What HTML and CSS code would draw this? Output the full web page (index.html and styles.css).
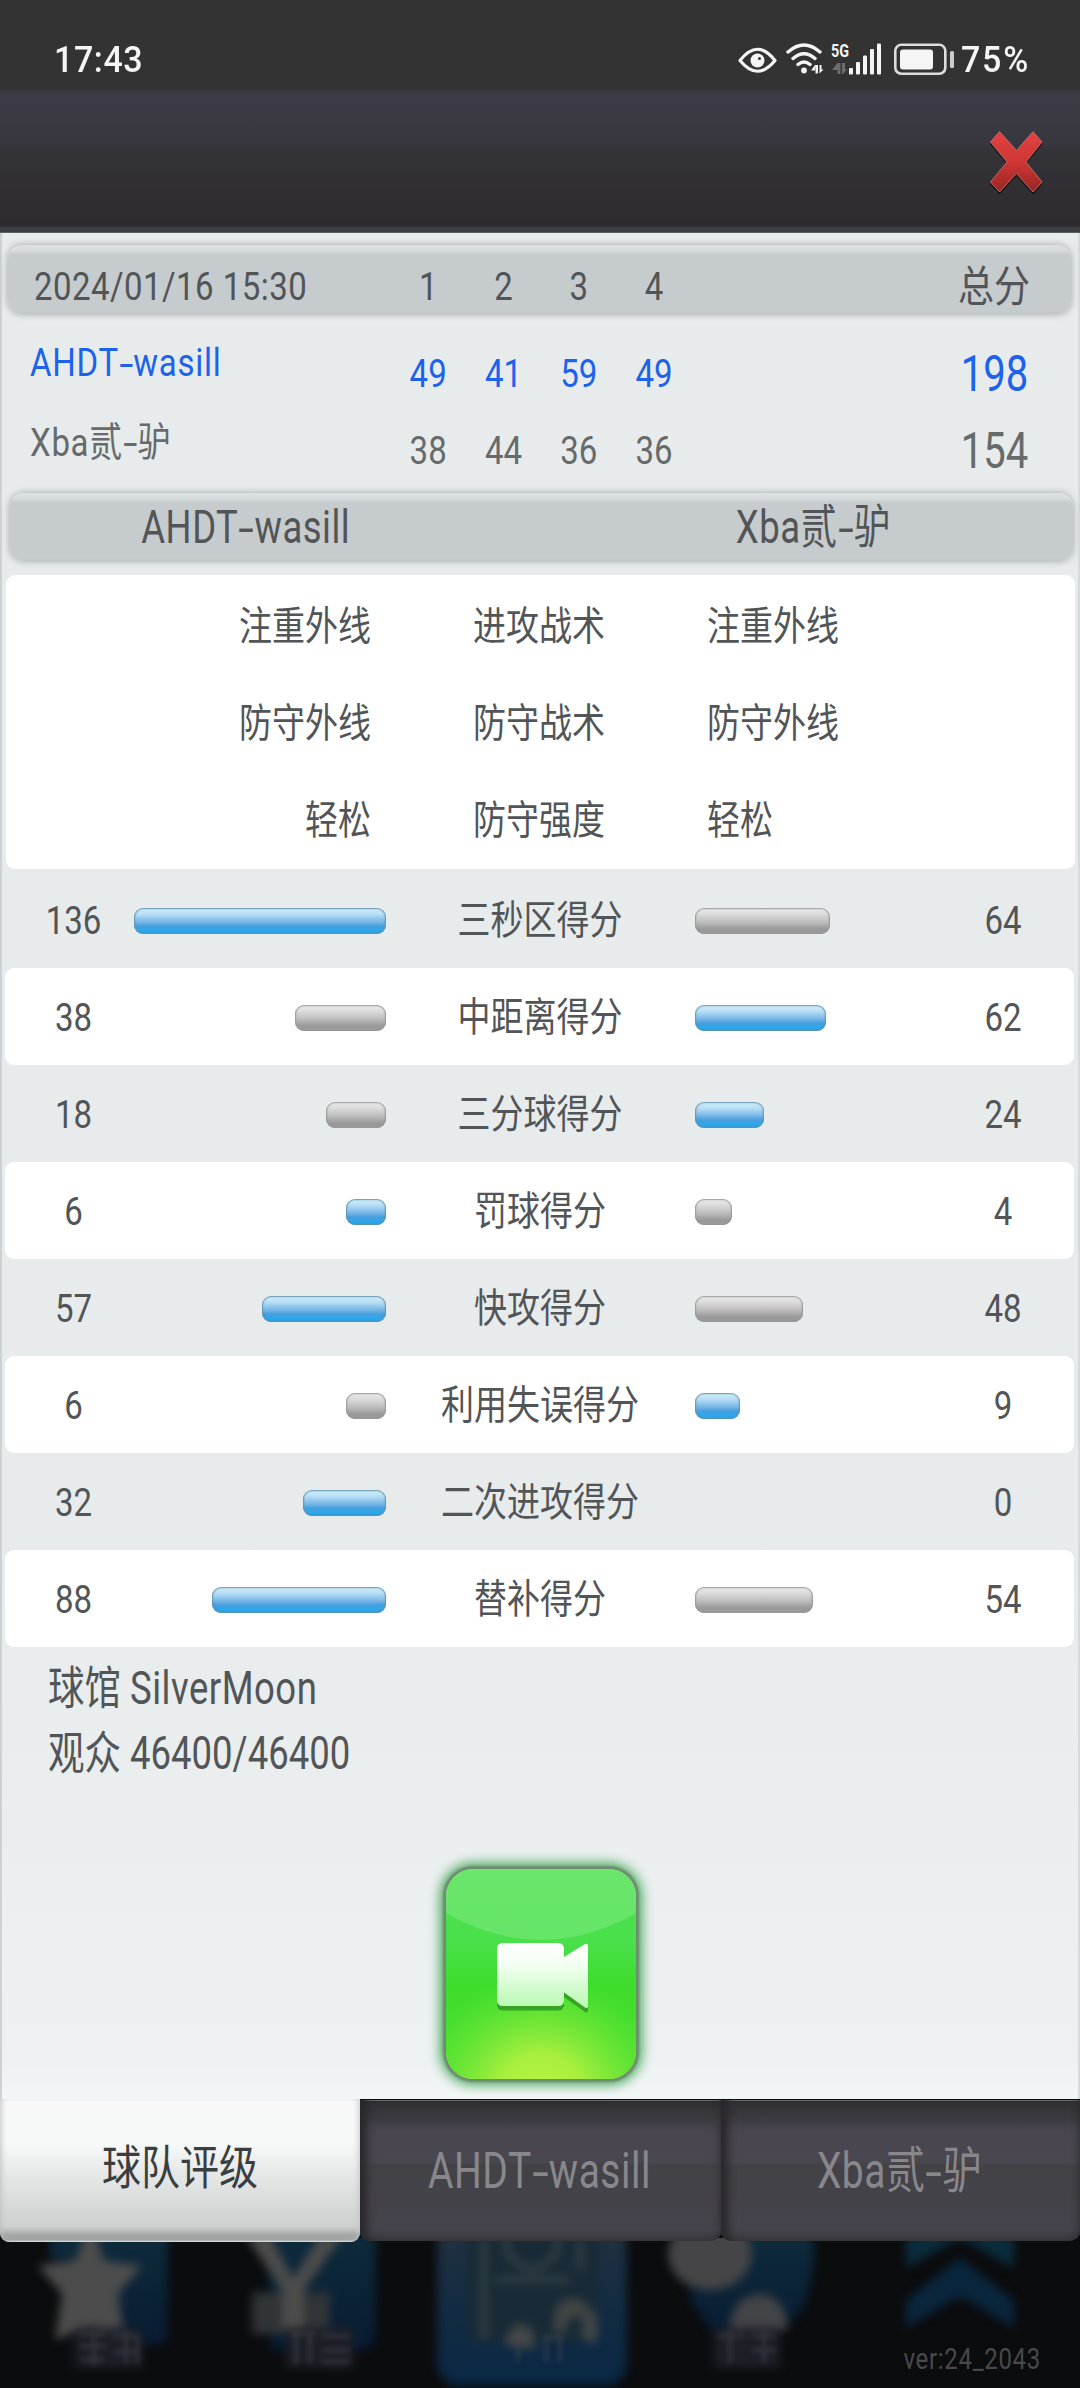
FILE: index.html
```html
<!DOCTYPE html>
<html lang="zh-CN">
<head>
<meta charset="utf-8">
<title>比赛统计</title>
<link rel="stylesheet" href="styles.css">
</head>
<body>
<div class="screen">
  <header class="status">
    <span class="status-time">17:43</span>
    <svg class="status-icons" width="220" height="40" viewBox="735 39 220 40" fill="#f5f5f5">
      <path d="M740 60.500Q757.500 38 775 60.500Q757.500 82 740 60.500Z" fill="none" stroke="#f5f5f5" stroke-width="3.200" stroke-linejoin="round"/>
      <circle cx="757.500" cy="60.500" r="7"/><circle cx="759.500" cy="58.500" r="1.500" fill="#333"/>
      <g fill="none" stroke="#f5f5f5" stroke-width="3.400" stroke-linecap="round"><path d="M788 52Q804 38 820 52M793 58.500Q804 49 815 58.500M798 64.500Q804 59.500 810 64.500"/></g>
      <circle cx="804" cy="70.500" r="2.900"/>
      <path d="M815.500 65V73.500H818V65L815 65L811 70.500H815ZM819.500 65V73.500L823.500 69.500H821.500V65Z"/>
      <text x="831" y="57" class="net" textLength="18" lengthAdjust="spacingAndGlyphs">5G</text>
      <path d="M837.500 63V74H840.500V63H837.500L832 70H837.500ZM842 63V74H843L847 69H845V63Z" fill="#6d6d6d"/>
      <rect x="849" y="68" width="4" height="6.500" rx="1"/><rect x="856" y="62" width="4" height="12.500" rx="1"/><rect x="863" y="55.500" width="4" height="19" rx="1"/><rect x="870" y="49" width="4" height="25.500" rx="1"/><rect x="877" y="43.500" width="4" height="31" rx="1"/>
      <rect x="895.300" y="44.800" width="50" height="29" rx="6" fill="none" stroke="#ddd" stroke-width="2.600"/>
      <rect x="900" y="49.500" width="33" height="20" rx="3"/><rect x="950" y="51" width="4" height="17" rx="1.500" fill="#ccc"/>
    </svg>
    <span class="status-battery">75%</span>
  </header>

  <div class="titlebar">
    <svg class="close" width="60" height="70" viewBox="987 127 60 70">
      <defs><linearGradient id="red" x1="0" y1="0" x2="0" y2="1"><stop offset="0" stop-color="#e24341"/><stop offset=".5" stop-color="#cf3634"/><stop offset="1" stop-color="#982624"/></linearGradient></defs>
      <path d="M1000.500 133.500L1017.500 152.500L1034 133.500L1043.500 144L1027.500 163.500L1043.500 184L1034 194.500L1017.500 176L1000.500 194.500L991 184L1007.500 163.500L991 144Z" fill="#1d1113"/>
      <path d="M1000.500 131.500L1017.500 150.500L1034 131.500L1043 142L1027 162L1043 182L1034 192L1017.500 173.500L1000.500 192L991.500 182L1008 162L991.500 142Z" fill="url(#red)" stroke="#b86a68" stroke-width="1"/>
    </svg>
  </div>

  <main class="panel">
    <div class="bar score-grid">
      <span class="t date">2024/01/16 15:30</span>
      <span class="t c">1</span><span class="t c">2</span><span class="t c">3</span><span class="t c">4</span>
      <span></span><span class="t c sum-label">总分</span>
    </div>
    <div class="score-grid score win">
      <span class="t name">AHDT<i class="dash">-</i>wasill</span>
      <span class="t c">49</span><span class="t c">41</span><span class="t c">59</span><span class="t c">49</span>
      <span></span><span class="t c total">198</span>
    </div>
    <div class="score-grid score lose">
      <span class="t name">Xba贰<i class="dash">-</i>驴</span>
      <span class="t c">38</span><span class="t c">44</span><span class="t c">36</span><span class="t c">36</span>
      <span></span><span class="t c total">154</span>
    </div>
    <div class="bar teams">
      <span class="t">AHDT<i class="dash">-</i>wasill</span><span class="t">Xba贰<i class="dash">-</i>驴</span>
    </div>

    <section class="tactics">
      <div class="tactic"><span class="t">注重外线</span><span class="t c">进攻战术</span><span class="t">注重外线</span></div>
      <div class="tactic"><span class="t">防守外线</span><span class="t c">防守战术</span><span class="t">防守外线</span></div>
      <div class="tactic"><span class="t">轻松</span><span class="t c">防守强度</span><span class="t">轻松</span></div>
    </section>

    <section class="stats">
      <div class="stat"><span class="t c">136</span><div class="track"><b class="pill blue" style="width:252px"></b></div><span class="t c">三秒区得分</span><div class="track"><b class="pill" style="width:135px"></b></div><span class="t c">64</span></div>
      <div class="stat"><span class="t c">38</span><div class="track"><b class="pill" style="width:91px"></b></div><span class="t c">中距离得分</span><div class="track"><b class="pill blue" style="width:131px"></b></div><span class="t c">62</span></div>
      <div class="stat"><span class="t c">18</span><div class="track"><b class="pill" style="width:60px"></b></div><span class="t c">三分球得分</span><div class="track"><b class="pill blue" style="width:69px"></b></div><span class="t c">24</span></div>
      <div class="stat"><span class="t c">6</span><div class="track"><b class="pill blue" style="width:40px"></b></div><span class="t c">罚球得分</span><div class="track"><b class="pill" style="width:37px"></b></div><span class="t c">4</span></div>
      <div class="stat"><span class="t c">57</span><div class="track"><b class="pill blue" style="width:124px"></b></div><span class="t c">快攻得分</span><div class="track"><b class="pill" style="width:108px"></b></div><span class="t c">48</span></div>
      <div class="stat"><span class="t c">6</span><div class="track"><b class="pill" style="width:40px"></b></div><span class="t c">利用失误得分</span><div class="track"><b class="pill blue" style="width:45px"></b></div><span class="t c">9</span></div>
      <div class="stat"><span class="t c">32</span><div class="track"><b class="pill blue" style="width:83px"></b></div><span class="t c">二次进攻得分</span><div class="track"></div><span class="t c">0</span></div>
      <div class="stat"><span class="t c">88</span><div class="track"><b class="pill blue" style="width:174px"></b></div><span class="t c">替补得分</span><div class="track"><b class="pill" style="width:118px"></b></div><span class="t c">54</span></div>
    </section>

    <section class="info">
      <span class="t">球馆 <span class="venue">SilverMoon</span></span>
      <span class="t">观众 46400/46400</span>
    </section>

    <button class="replay" aria-label="回放">
      <svg width="190" height="210" viewBox="0 0 190 210">
        <defs>
          <linearGradient id="g" x1="0" y1="0" x2="0" y2="1"><stop offset="0" stop-color="#4fe150"/><stop offset=".35" stop-color="#49e04b"/><stop offset=".55" stop-color="#3edc2c"/><stop offset="1" stop-color="#4fe030"/></linearGradient>
          <radialGradient id="y" gradientUnits="userSpaceOnUse" cx="95" cy="230" r="125"><stop offset="0" stop-color="#b9f542"/><stop offset=".35" stop-color="#b2f040" stop-opacity=".92"/><stop offset="1" stop-color="#70e838" stop-opacity="0"/></radialGradient>
          <linearGradient id="w" x1="0" y1="0" x2="0" y2="1"><stop offset="0" stop-color="#fff"/><stop offset=".3" stop-color="#f5fff4"/><stop offset="1" stop-color="#b8fab0"/></linearGradient>
        </defs>
        <rect width="190" height="210" fill="url(#g)"/>
        <rect width="190" height="210" fill="url(#y)"/>
        <path d="M0 0H190V44Q95 98 0 44Z" fill="#fff" opacity=".16"/>
        <path transform="translate(0 4.500)" d="M57 74H112Q118 74 118 80V88L139 75Q142 74 142 77V137Q142 140 139 138.500L118 123.500V131Q118 137 112 137H57Q51 137 51 131V80Q51 74 57 74Z" fill="#2c8f20" opacity=".75"/>
        <path d="M57 74H112Q118 74 118 80V88L139 75Q142 74 142 77V137Q142 140 139 138.500L118 123.500V131Q118 137 112 137H57Q51 137 51 131V80Q51 74 57 74Z" fill="url(#w)"/>
      </svg>
    </button>
  </main>

  <footer class="bottom">
    <nav class="tabs">
      <a class="tab active"><span class="t">球队评级</span></a>
      <a class="tab"><span class="t">AHDT<i class="dash">-</i>wasill</span></a>
      <a class="tab"><span class="t">Xba贰<i class="dash">-</i>驴</span></a>
    </nav>
    <div class="dock">
      <svg class="dock-art" width="1080" height="150" viewBox="0 2238 1080 150">
        <defs>
          <filter id="b" x="-20%" y="-20%" width="140%" height="140%" color-interpolation-filters="sRGB"><feGaussianBlur stdDeviation="5"/></filter>
          <linearGradient id="n" x1="0" y1="0" x2="0" y2="1"><stop offset="0" stop-color="#0e2c3c"/><stop offset="1" stop-color="#081b32"/></linearGradient>
          <linearGradient id="p" x1="0" y1="0" x2="0" y2="1"><stop offset="0" stop-color="#273240"/><stop offset=".5" stop-color="#142c42"/><stop offset="1" stop-color="#092744"/></linearGradient>
        </defs>
        <g filter="url(#b)">
          <path d="M100 2225H168V2332Q168 2345 155 2345H110V2260H50V2225Z" fill="url(#n)"/>
          <path d="M90 2220L104 2260L142 2266L118 2294L124 2336L90 2326L55 2340L62 2294L38 2266L76 2260Z" fill="#4c4c4c"/>
          <path d="M260 2225H376V2332Q376 2350 360 2350H270V2290Z" fill="url(#n)"/>
          <rect x="252" y="2292" width="78" height="42" fill="#303436"/>
          <path d="M246 2236L282 2290V2328H304V2290L342 2236H320L293 2278L270 2236Z" fill="#4c4c4b"/>
          <rect x="437" y="2210" width="190" height="176" rx="22" fill="url(#p)"/>
          <rect x="468" y="2225" width="130" height="116" rx="10" fill="#182a36"/>
          <g fill="none" stroke="#2d3a41" stroke-width="9"><circle cx="532" cy="2242" r="26"/><path d="M484 2238V2340M496 2280H570M580 2240V2270"/></g>
          <path d="M504 2345Q515 2310 534 2332V2350ZM556 2308Q570 2288 590 2308Q604 2320 594 2345L582 2338V2315L567 2320V2332H552Z" fill="#414545"/>
          <path d="M690 2225H810Q822 2260 802 2310L770 2342H720L690 2300Z" fill="url(#n)"/>
          <ellipse cx="710" cy="2254" rx="42" ry="36" fill="#454547"/><path d="M729 2330Q732 2296 760 2294Q786 2296 788 2330Z" fill="#434447"/>
          <path d="M906 2236L960 2208L1014 2236V2268L960 2238L906 2268Z" fill="#0b2c3c"/>
          <path d="M906 2300L960 2258L1014 2300V2328L960 2296L906 2328Z" fill="#0a263d"/>
          <g fill="#1d1f27"><rect x="74" y="2328" width="68" height="40"/><rect x="286" y="2328" width="68" height="40"/><rect x="714" y="2328" width="66" height="40"/></g>
        </g>
        <g opacity=".45" stroke="#4a4c55" stroke-width="4" fill="none" filter="url(#s)">
          <path d="M80 2334H106M80 2346H106M82 2360H104M94 2330V2366M112 2336H138M114 2352H136M126 2330V2364M138 2336V2364M290 2334H316M296 2330V2364M310 2334V2364M322 2336H350M322 2350H350M322 2362H350M718 2336H744M730 2330V2364M752 2336H776M752 2350H776M764 2330V2364M506 2338H530M518 2332V2362M542 2338H564M546 2334V2362M560 2334V2362"/>
        </g>
        <filter id="s"><feGaussianBlur stdDeviation="2.800"/></filter>
      </svg>
      <span class="t version">ver:24_2043</span>
    </div>
  </footer>
</div>
</body>
</html>
```
FILE: styles.css
```css
* { box-sizing: border-box; }
body {
  margin: 0;
  background: #0b0c0e;
  font-family: Roboto, "Noto Sans CJK SC", sans-serif;
  font-size: 33px;
  line-height: 40px;
  color: #525557;
}
.screen { width: 1080px; height: 2388px; overflow: hidden; display: flex; flex-direction: column; }

.t { display: inline-block; transform: translateY(1.2px) scaleY(1.2); white-space: nowrap; }
.c { text-align: center; }
.dash { display: inline-block; width: .44em; text-align: center; font-style: normal; transform: translateY(.02em) scaleX(1.55); letter-spacing: 0; }

.status { height: 90px; padding: 28px 49px 0 54px; background: #333; color: #f5f5f5; display: flex; align-items: center; font-size: 34px; font-weight: 500; }
.status-time { letter-spacing: .6px; transform: scaleY(1.08); }
.status-icons { margin-left: auto; margin-right: 6px; }
.status-battery { width: 70px; letter-spacing: 1.8px; transform: scaleY(1.08); }
.net { font-size: 18px; font-weight: 700; }

.titlebar { height: 143px; padding: 37px 34px 0; display: flex; justify-content: flex-end; background: linear-gradient(#3a393e, #3c3a44 10px, #38363f 54px, #343337 60px, #2d2b30 136px, #3c4143 138px, #3a3f41 142px, #7b8081 143px); }

.panel { height: 1866px; display: flex; flex-direction: column; background: linear-gradient(#e7ebec 70%, #edf1f2 98%, #f3f6f7); box-shadow: inset 2px 0 #cbd1d4, inset -2px 0 #d5dadc; }
.bar { flex: none; height: 69px; margin: 12px 9px 0 8px; border-radius: 14px; background: linear-gradient(#dbe0e2, #d8dddf 5px, #c6cbce 10px, #c6cbce 66px, #bec4c7); box-shadow: 0 0 6px 1px #aeb4b7; align-items: center; }
.score-grid { display: grid; grid-template-columns: 390.5px repeat(4, 75.3px) 1fr 167px; align-items: center; }
.bar.score-grid { grid-template-columns: 382.5px repeat(4, 75.3px) 1fr 158px; padding-top: 12px; }
.date { padding-left: 26px; letter-spacing: .45px; }
.sum-label { font-size: 36px; padding-left: 4px; }
.score { flex: none; height: 77px; color: #666a6b; }
.win { margin-top: 20px; color: #1c62ec; }
.name { padding-left: 30px; letter-spacing: .7px; }
.win .name { transform: translateY(-10px) scaleY(1.2); }
.lose .name { transform: translateY(-7.5px) scaleY(1.2); }
.total { font-size: 40px; transform: translateY(1.5px) scaleY(1.27); padding-right: 4px; }
.teams { height: 68px; margin: 5px 7px 0 10px; display: grid; grid-template-columns: 1fr 1fr; text-align: center; font-size: 36.500px; }
.teams .t { transform: translateY(.5px) scaleY(1.28); }
.teams .t:first-child { padding-right: 60px; letter-spacing: .5px; }
.teams .t:last-child { padding-left: 12px; letter-spacing: .5px; }

.tactics { flex: none; margin: 14px 5px 0 6px; height: 294px; border-radius: 9px; background: #fff; }
.tactic { height: 97px; display: grid; grid-template-columns: 365px 1fr 372px; align-items: center; }
.tactic .t { transform: translateY(2.5px) scaleY(1.2); }
.tactic .t:first-child { text-align: right; }
.tactic .t:nth-child(2) { padding-left: 4px; }
.tactic .t:last-child { padding-left: 4px; }

.stats { flex: none; margin: 2px 6px 0 5px; }
.stat { height: 97px; border-radius: 9px; display: grid; grid-template-columns: 137px 243.5px 309px 237.5px 142px; align-items: center; }
.stat:nth-child(even) { background: #fff; }
.track { display: flex; padding-top: 3px; }
.track:nth-child(2) { justify-content: flex-end; }
.pill { height: 26px; flex: none; border-radius: 9px; background: linear-gradient(#ececec, #dcdcdc 6px, #bdbdbd 14px, #999 21px, #9b9b9b); box-shadow: inset 0 0 1.500px 1px #939799; }
.pill.blue { background: linear-gradient(#d2effa, #b9dff5 6px, #76b5e6 14px, #479fdd 18px, #2aa7ed 23px, #259de0); box-shadow: inset 0 0 1.500px 1px #6391ad; }

.info { flex: none; padding: 21px 48px 0; display: flex; flex-direction: column; gap: 25px; align-items: flex-start; font-size: 36.500px; }
.info .t { transform: translateY(.5px) scaleY(1.26); }
.venue { letter-spacing: .5px; }

.replay { flex: none; width: 190px; height: 210px; margin: 96px auto 0 446px; padding: 0; border: 0; border-radius: 27px; overflow: hidden; background: none; box-shadow: 0 0 2px 3px #6f8c70, 0 0 12px 6px #49a95b; }
.replay svg { display: block; }

.bottom { flex: 1; display: flex; flex-direction: column; background: #0b0c0e; }
.tabs { height: 142px; display: grid; grid-template-columns: 360px 361px 359px; position: relative; z-index: 1; }
.tab { height: 141px; margin-top: 1px; display: flex; align-items: center; justify-content: center; font-size: 39px; color: #88878c; border-radius: 0 0 10px 10px; background: linear-gradient(#303034, #38373c 14px, #494650 32px, #494750 62px, #434247 65px, #45434b 128px, #3e3d42); box-shadow: inset 9px 0 9px -2px #29282c, inset -6px 0 8px -6px #29282c, inset 0 1px #858789; }
.tab .t { transform: translate(-1px, 0) scaleY(1.28); letter-spacing: .5px; }
.tab.active { height: 143px; margin-top: 0; color: #3b3e40; border-radius: 0 0 9px 9px; background: linear-gradient(#f7f9f9 45px, #e6e8e8 75px, #cdd0cf 128px, #a3a6a5 136px, #a0a3a2 141px, #eee 143px); box-shadow: inset 5px 0 6px -4px #bbbebd, inset -5px 0 6px -4px #c2c5c4; }
.tab.active .t { transform: translateY(-3px) scaleY(1.2); letter-spacing: 0; }
.dock { flex: 1; display: grid; }
.dock-art, .version { grid-area: 1 / 1; }
.dock-art { margin-top: -3px; z-index: 0; }
.version { justify-self: end; align-self: end; margin: 0 39px 10px 0; font-size: 24px; color: #48494b; letter-spacing: .7px; z-index: 1; }
```
